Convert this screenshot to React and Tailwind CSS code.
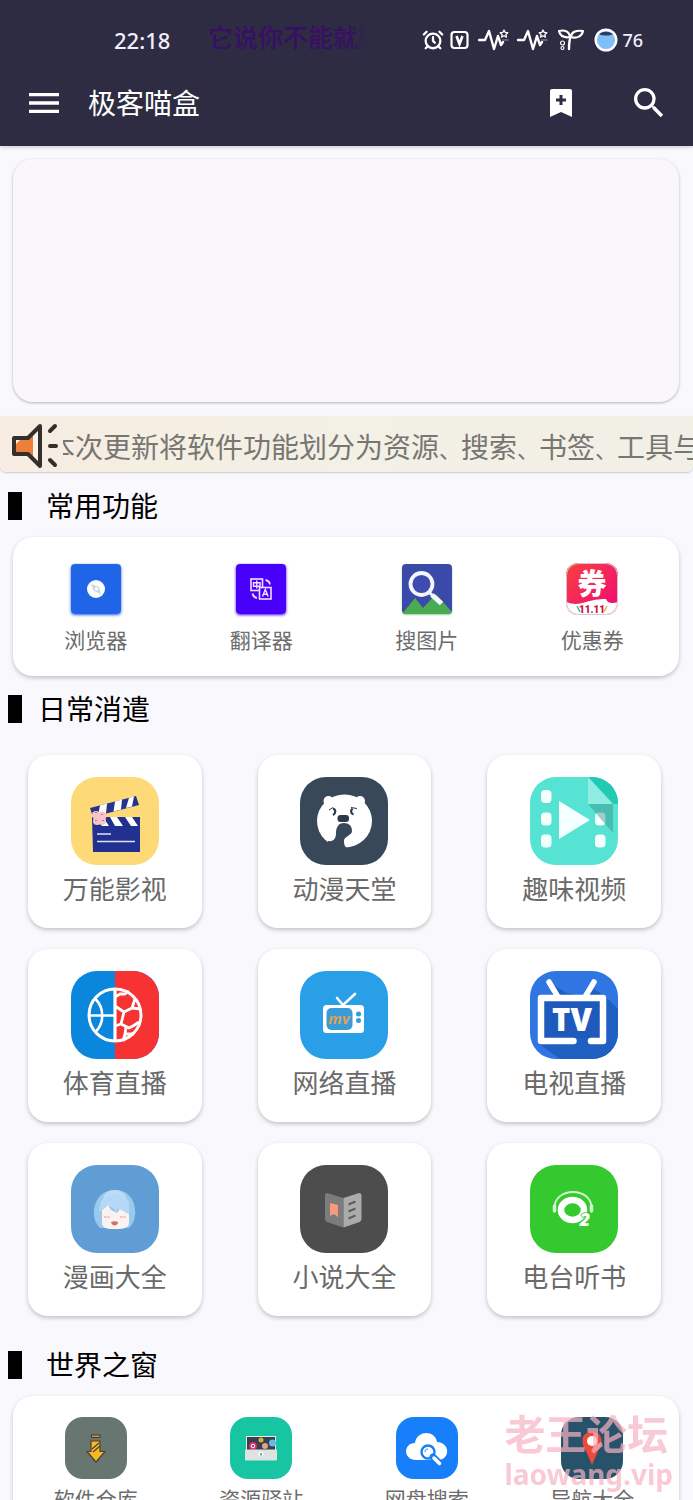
import React from "react";
import { AlarmClock } from "lucide-react";
import { MdMenu, MdSearch } from "react-icons/md";

const cardShadow = "shadow-[0_2px_4px_rgba(0,0,0,0.22)]";

/* ---------- status bar icons ---------- */

function PulseIcon() {
  return (
    <svg viewBox="0 0 31 24" className="h-6 w-[31px]" fill="none" stroke="#fff" strokeLinejoin="round" strokeLinecap="round">
      <path d="M1 12h6l4-9 5 18 4-13 3 9 2-3" strokeWidth="2.400" />
      <path d="M26 2l1.200 2.400 2.600.300-1.900 1.800.500 2.600-2.400-1.300-2.400 1.300.500-2.600-1.900-1.800 2.600-.300z" strokeWidth="1.300" />
      <path d="M25 12h5" stroke="#77758a" strokeWidth="1.500" />
    </svg>
  );
}

function SproutIcon() {
  return (
    <svg viewBox="0 0 26 24" className="h-6 w-[26px]" fill="none" stroke="#fff" strokeLinejoin="round" strokeLinecap="round">
      <path d="M11 21c0-6 0-9 2-13" strokeWidth="2.400" />
      <path d="M1 3c4-1 10-1 11 6C6 10 2 8 1 3zM13 9c0-5 5-7 12-6-1 5-6 8-12 6z" strokeWidth="2.200" />
      <circle cx="4.500" cy="15" r="2" strokeWidth="1.200" />
      <circle cx="4.500" cy="20" r="1.500" strokeWidth="1.200" />
    </svg>
  );
}

function StatusBar() {
  return (
    <div className="flex h-[60px] items-center pt-5 pr-[50px] pl-[114px] text-[#f1effa]">
      <span className="w-[94px] text-[22px] leading-8 font-medium">22:18</span>
      <span className="-mt-1.5 w-40 overflow-hidden text-[25px] leading-8 font-medium whitespace-nowrap text-[#390d68] [mask-image:linear-gradient(to_right,#000_88%,transparent)]">
        它说你不能就这
      </span>
      <div className="ml-auto flex items-center">
        <AlarmClock size={22} strokeWidth={2.5} className="mr-1.5 text-white" />
        <svg viewBox="0 0 20 20" className="mr-2 h-5 w-5" fill="none" stroke="#fff">
          <rect x="1.500" y="2" width="16" height="16" rx="3" strokeWidth="2.200" />
          <path d="M6.500 6l3 8 3-8" strokeWidth="2.600" />
        </svg>
        <PulseIcon />
        <span className="w-2" />
        <PulseIcon />
        <span className="w-2.5" />
        <SproutIcon />
        <svg viewBox="0 0 24 24" className="mx-2.5 h-6 w-6">
          <circle cx="12" cy="12" r="10" fill="#80bef7" />
          <path d="M5 6c3-3 11-3 14 0-3 2-11 2-14 0z" fill="#2b3c5c" />
          <circle cx="12" cy="12" r="10.300" fill="none" stroke="#fff" strokeWidth="2.400" />
        </svg>
        <span className="-ml-1.5 text-lg leading-8 font-medium">76</span>
      </div>
    </div>
  );
}

function TopBar() {
  return (
    <div className="flex h-[86px] items-center pr-6 pl-6 text-white">
      <button type="button" aria-label="菜单">
        <MdMenu size={40} />
      </button>
      <h1 className="ml-6 text-[28px] leading-9">极客喵盒</h1>
      <button type="button" aria-label="添加书签" className="ml-auto">
        <svg viewBox="0 0 24 30" className="h-[30px] w-6">
          <path d="M3 1h18a2 2 0 0 1 2 2v26l-11-5-11 5V3a2 2 0 0 1 2-2z" fill="#fff" />
          <path d="M12 7v10M7 12h10" stroke="#2e2c42" strokeWidth="3" />
        </svg>
      </button>
      <button type="button" aria-label="搜索" className="ml-14">
        <MdSearch size={40} />
      </button>
    </div>
  );
}

/* ---------- icons of the shortcut row ---------- */

function BrowserIcon() {
  return (
    <svg viewBox="0 0 50 50" className="h-[50px] w-[50px] rounded-sm shadow-[0_1px_3px_#2064e8]">
      <rect width="50" height="50" fill="#2064e8" />
      <circle cx="25" cy="25" r="9" fill="#fbfdff" />
      <path d="M20 20l8 3 2 7-7-3z" fill="#cbd8e2" />
      <circle cx="25.500" cy="25" r="1.800" fill="#fff" />
    </svg>
  );
}

function TranslateIcon() {
  return (
    <svg viewBox="0 0 50 50" className="h-[50px] w-[50px] rounded-sm shadow-[0_1px_3px_#4a00fb]" fill="none" stroke="#f3dcff" strokeWidth="1.600">
      <rect width="50" height="50" fill="#4800fa" stroke="none" />
      <rect x="15" y="15" width="11.500" height="11.500" />
      <path d="M17.500 18.700h6.500v3.600h-6.500zM20.750 16.500v8" strokeWidth="1.400" />
      <rect x="23.500" y="23.500" width="11.500" height="11.500" fill="#4800fa" />
      <path d="M26.500 32.500l2.800-7 2.800 7M27.500 30.300h3.600" strokeWidth="1.500" />
      <path d="M29.500 16c2.500.500 4 2 4.500 4.500M16.500 29.500c.500 2.500 2 4 4.500 4.500" strokeWidth="1.800" />
    </svg>
  );
}

function ImageSearchIcon() {
  return (
    <svg viewBox="0 0 50 50" className="h-[50px] w-[50px] rounded-sm shadow-[0_1px_2px_#9bd0a0]">
      <rect width="50" height="50" fill="#3b4aa8" />
      <path d="M0 50L13 34l8 10 13-14 16 18v2z" fill="#49ab52" />
      <circle cx="19.500" cy="20" r="11" fill="#3f4bae" stroke="#f4f7ff" strokeWidth="3.800" />
      <path d="M27.500 28.500l3 3" stroke="#f4f7ff" strokeWidth="3" />
      <path d="M30 31l9.500 8.500" stroke="#f4f7ff" strokeWidth="5" />
    </svg>
  );
}

function CouponIcon() {
  return (
    <svg viewBox="0 0 52 52" className="h-[52px] w-[52px] rounded-xl">
      <defs>
        <linearGradient id="coupon" x1="0" y1="0" x2="1" y2="1">
          <stop offset="0" stopColor="#f8413f" />
          <stop offset="1" stopColor="#f0067a" />
        </linearGradient>
      </defs>
      <rect width="52" height="52" fill="url(#coupon)" />
      <path d="M0 39c8 3 14 2 20 0 7-2 12-3 20-3 1 4 6 5 12 3v13H0z" fill="#fff" />
      <rect x="0.500" y="0.500" width="51" height="51" rx="12" fill="none" stroke="#d8c3cc" />
      <text x="26" y="32" textAnchor="middle" fontSize="29" fontWeight="900" fill="#fff">券</text>
      <text x="26" y="50" textAnchor="middle" fontSize="10" fontWeight="900" fill="#c8103c" className="font-[Roboto]">11.11</text>
      <path d="M11 43l3 6" stroke="#39bba0" strokeWidth="1.500" />
      <path d="M41 43l-3 6" stroke="#dfb34d" strokeWidth="1.500" />
    </svg>
  );
}

/* ---------- icons of the big tiles ---------- */

function Tile({ bg, children }) {
  return (
    <svg viewBox="0 0 88 88" className="h-[88px] w-[88px] rounded-[26px]">
      <rect width="88" height="88" fill={bg} />
      {children}
    </svg>
  );
}

function ClapperIcon() {
  return (
    <Tile bg="#fdd978">
      <path d="M19 31l46-12 3 9-46 12z" fill="#26348f" />
      <path d="M29 28.400l7-1.800-1 10-8 2zM44 24.500l7-1.900-1 10-7.500 2zM58 20.800l5-1.300-2 10-6 1.500z" fill="#fff" />
      <path d="M21 40h48v35H22z" fill="#22318f" />
      <path d="M25 40h7l6 9h-7zM39 40h7l6 9h-8zM54 40h7l6 9h-7z" fill="#fff" />
      <circle cx="25" cy="38" r="4" fill="#f8c4cb" />
      <circle cx="31" cy="39" r="4.500" fill="#f8c4cb" />
      <circle cx="26" cy="44" r="4" fill="#f8c4cb" />
      <circle cx="31" cy="44" r="4" fill="#f8c4cb" />
      <path d="M25 35v1M31 37v1M25 43v1M32 43v1" stroke="#b2478a" strokeWidth="1.500" />
      <path d="M26 57h14M26 64.500h38" stroke="#dfe1f3" strokeWidth="1.600" />
    </Tile>
  );
}

function BearIcon() {
  return (
    <Tile bg="#384858">
      <ellipse cx="44.500" cy="44" rx="27.500" ry="26.500" fill="#fff" />
      <circle cx="28.500" cy="24" r="5" fill="#fff" />
      <circle cx="60" cy="24" r="5" fill="#fff" />
      <path d="M36 56c0-5 2-10 8-10s8 4 8 8c0 5-9 5-8 11 0 3 1 5 4 7H28v-8c6 1 8-3 8-8z" fill="#384858" />
      <rect x="37.500" y="38" width="11.500" height="7" rx="3" fill="#2d3a47" />
      <path d="M33 31.500c3 1 3 5 0 6.500M52.500 31.500c-2 2-2 5 1 6" fill="none" stroke="#2d3a47" strokeWidth="2.200" />
      <path d="M29 33l4-2.500M51 30.500l6 1" stroke="#2d3a47" strokeWidth="1" />
    </Tile>
  );
}

function FunVideoIcon() {
  return (
    <Tile bg="#56e3d3">
      <rect x="11" y="13" width="10.500" height="13" rx="4" fill="#f4fffd" />
      <rect x="11" y="35.500" width="10.500" height="13" rx="4" fill="#f4fffd" />
      <rect x="11" y="57.500" width="10.500" height="13" rx="4" fill="#f4fffd" />
      <rect x="65" y="35.500" width="10.500" height="13" rx="4" fill="#f4fffd" />
      <rect x="65" y="57.500" width="10.500" height="13" rx="4" fill="#f4fffd" />
      <path d="M29 24l31 19-31 19z" fill="#f4ffff" />
      <path d="M58 0h30v27h-5z" fill="#22c9b5" />
      <path d="M58 0l25 27H58z" fill="#8eece0" />
      <path d="M58 27h25v29z" fill="#3a8f84" fillOpacity="0.45" />
    </Tile>
  );
}

function SportsIcon() {
  return (
    <Tile bg="#0a86dc">
      <rect x="44" width="44" height="88" fill="#f63233" />
      <g fill="none" stroke="#fff" strokeWidth="2.600" strokeLinejoin="round">
        <circle cx="44" cy="44" r="26" strokeWidth="3" />
        <path d="M44 18v52" strokeWidth="3.200" />
        <path d="M18 44.500h14M32 44.500h12M24.500 28c9 9 9 24 0 33" />
        <path d="M44 26l5-3 5 0 4-3M44 35l9 6 8-4 9 1M61 37l3-9M53 41l-3 12-6 2M50 53l8 4 4-2 6-4M55 56l-1 7-2 7M54 63l9 0" strokeWidth="2.800" />
      </g>
    </Tile>
  );
}

function NetTvIcon() {
  return (
    <Tile bg="#289fe6">
      <path d="M37 27l6 7 12-11" fill="none" stroke="#fff" strokeWidth="2.600" strokeLinecap="round" />
      <rect x="23" y="34" width="41" height="28" rx="3.500" fill="#fff" />
      <rect x="26.500" y="37" width="26" height="22" rx="5" fill="#3a9cd6" />
      <text x="39" y="53" textAnchor="middle" fontSize="15" fontWeight="700" fontStyle="italic" fill="#dba25c">mv</text>
      <circle cx="58.500" cy="43" r="2.500" fill="#289fe6" />
      <circle cx="58.500" cy="49.500" r="2.500" fill="#289fe6" />
    </Tile>
  );
}

function TvIcon() {
  return (
    <Tile bg="#2f76e3">
      <path d="M8 72L30 88h58V38L76 26l-12-8-8 8-20-4-12-8z" fill="#1f5fc2" />
      <path d="M14 29h58v38H14z" fill="#1e5abb" />
      <path d="M19 11l9 15M64 11l-9 15" stroke="#fff" strokeWidth="5.500" strokeLinecap="round" />
      <path d="M43.500 70H11V27h62v43H61" fill="none" stroke="#fff" strokeWidth="6.500" strokeLinecap="round" strokeLinejoin="round" />
      <text x="42" y="60" textAnchor="middle" fontSize="31" fontWeight="900" fill="#fff">TV</text>
    </Tile>
  );
}

function ComicIcon() {
  return (
    <Tile bg="#5f9dd4">
      <path d="M29 63c-5-5-7-12-6-19 2-12 10-19 21-19s19 7 20 19c1 7-1 14-6 19z" fill="#9bc9ee" />
      <path d="M31 39c1-9 4-14 13-14s14 8 14 22z" fill="#bcdcf5" />
      <path d="M31 45l6-5 3 5 6 3 3-4 7 4 2 1v10c-2 5-8 5-14 5s-13 0-13-6z" fill="#f9f2f1" />
      <path d="M28 47l6-5 4-6 6 9 2 2v-5l12 7V36L44 28l-14 8z" fill="#b4d8f5" />
      <path d="M33 52h6M49 52h6" stroke="#edb2ae" strokeWidth="1.500" strokeDasharray="2 0.700" />
      <path d="M40 57c2-1 5-1 7 0 0 4-6 5-7 0z" fill="#d76b6e" />
    </Tile>
  );
}

function NovelIcon() {
  return (
    <Tile bg="#4d4d4d">
      <path d="M27 28l16.500 5v29.500L27 57q-2-1-2-3V30q0-2 2-2z" fill="#7c7c7c" />
      <path d="M43.500 33L59 28q2.500 0 2.500 2.500V54q0 2-2 3l-16 5.500z" fill="#ababab" />
      <path d="M30 38l8 2v12l-4-3-4 2z" fill="#f59a7b" />
      <path d="M48.500 39.500l7-3M48.500 46.500l7-3M48.500 53.500l7-3" stroke="#5e5e5e" strokeWidth="2" />
    </Tile>
  );
}

function RadioIcon() {
  return (
    <Tile bg="#34c92f">
      <ellipse cx="42.500" cy="45" rx="11.500" ry="10" fill="none" stroke="#fff" strokeWidth="6.500" />
      <path d="M24.500 42c1-20 36-20 37 0" fill="none" stroke="#d3f6d0" strokeWidth="2" />
      <path d="M24.500 41v5M61.500 41v5" stroke="#d3f6d0" strokeWidth="3.500" strokeLinecap="round" />
      <text x="55" y="61" textAnchor="middle" fontSize="18" fontWeight="900" fontStyle="italic" fill="#fff" stroke="#34c92f" strokeWidth="1.500" paintOrder="stroke">2</text>
    </Tile>
  );
}

/* ---------- icons of the last row ---------- */

function SmallTile({ bg, children }) {
  return (
    <svg viewBox="0 0 62 62" className="h-[62px] w-[62px] rounded-[18px]">
      <rect width="62" height="62" fill={bg} />
      {children}
    </svg>
  );
}

function WarehouseIcon() {
  return (
    <SmallTile bg="#677671">
      <rect x="26.500" y="18" width="8.500" height="2.500" fill="#d49a2d" stroke="#49382f" />
      <path d="M26 24h9v10.500h5L31 45l-9-10.500h4z" fill="#fab722" stroke="#493f38" strokeWidth="1.200" />
      <path d="M27 32l7-6M28 35l7-6" stroke="#493f38" strokeWidth="1.200" />
    </SmallTile>
  );
}

function StationIcon() {
  return (
    <SmallTile bg="#18c5a2">
      <rect x="16.500" y="19.500" width="29" height="20" fill="#37404f" stroke="#e6edec" />
      <circle cx="23" cy="29" r="4" fill="#d92a6c" />
      <circle cx="23" cy="29" r="1.800" fill="none" stroke="#fff" />
      <circle cx="31" cy="23" r="2.500" fill="#d8ad3c" />
      <circle cx="35" cy="29" r="3" fill="#e2a284" />
      <circle cx="42.500" cy="26" r="3.500" fill="#68b9e8" />
      <rect x="15" y="32.500" width="32" height="11" rx="1" fill="#dde2e3" />
      <circle cx="31" cy="37" r="2.500" fill="#fff" />
      <path d="M31 36v2.500" stroke="#333" />
    </SmallTile>
  );
}

function CloudSearchIcon() {
  return (
    <SmallTile bg="#187ffb">
      <path d="M20 43c-13 0-13-17-1-17 2-13 20-13 22-1 14 1 13 18 1 18z" fill="#fff" />
      <circle cx="32" cy="35" r="6.500" fill="#fff" stroke="#187ffb" strokeWidth="2.400" />
      <path d="M37 40l7 7" stroke="#187ffb" strokeWidth="7" strokeLinecap="round" />
      <path d="M38 41l5.500 5.500" stroke="#fff" strokeWidth="3.500" strokeLinecap="round" />
      <path d="M29 35c0-2 1-3 3-3" fill="none" stroke="#187ffb" />
    </SmallTile>
  );
}

function NavIcon() {
  return (
    <SmallTile bg="#26526a">
      <path d="M31 15c-12 0-11 12-6 19l6 14 6-14c5-7 6-19-6-19z" fill="#ed4a3b" />
      <circle cx="31" cy="24" r="5" fill="#fff" />
    </SmallTile>
  );
}

function SpeakerIcon() {
  return (
    <svg viewBox="0 0 50 50" className="mt-1 h-[50px] w-[50px] shrink-0">
      <path d="M4 17h14L30 5v40L18 33H4z" fill="#fbf3ea" />
      <path d="M5 24l6-6h8l4-4v24l-4-5H5z" fill="#ee7f3b" />
      <path d="M4 17h14L30 5v40L18 33H4z" fill="none" stroke="#332f2c" strokeWidth="4" strokeLinejoin="round" />
      <path d="M40 10l5-5M40 25h6M40 39l5 5" stroke="#332f2c" strokeWidth="4" strokeLinecap="round" />
    </svg>
  );
}

/* ---------- data ---------- */

const notice = ["本次更新将软件功能划分为资源", "搜索", "书签", "工具与"];

const common = [
  { name: "浏览器", Icon: BrowserIcon },
  { name: "翻译器", Icon: TranslateIcon },
  { name: "搜图片", Icon: ImageSearchIcon },
  { name: "优惠券", Icon: CouponIcon },
];

const daily = [
  { name: "万能影视", Icon: ClapperIcon },
  { name: "动漫天堂", Icon: BearIcon },
  { name: "趣味视频", Icon: FunVideoIcon },
  { name: "体育直播", Icon: SportsIcon },
  { name: "网络直播", Icon: NetTvIcon },
  { name: "电视直播", Icon: TvIcon },
  { name: "漫画大全", Icon: ComicIcon },
  { name: "小说大全", Icon: NovelIcon },
  { name: "电台听书", Icon: RadioIcon },
];

const world = [
  { name: "软件仓库", Icon: WarehouseIcon },
  { name: "资源驿站", Icon: StationIcon },
  { name: "网盘搜索", Icon: CloudSearchIcon },
  { name: "导航大全", Icon: NavIcon },
];

function SectionTitle({ children, tight }) {
  return (
    <h2 className={`flex items-center pl-2 text-[28px] leading-9 text-black ${tight ? "gap-4" : "gap-6"}`}>
      <span className="h-7 w-[14px] bg-black" />
      {children}
    </h2>
  );
}

function Shortcut({ item }) {
  const { name, Icon } = item;
  return (
    <button type="button" className="flex flex-col items-center text-[21px] leading-6 text-[#6c6c6c]">
      <span className="flex h-[62px] items-center">
        <Icon />
      </span>
      <span className="mt-2">{name}</span>
    </button>
  );
}

function App() {
  return (
    <div className="relative flex h-screen flex-col overflow-hidden bg-[#f9f8fc] font-['Noto_Sans','Noto_Sans_CJK_SC',sans-serif]">
      <header className="shrink-0 bg-[#2e2c42] shadow-[0_1px_4px_rgba(0,0,0,0.2)]">
        <StatusBar />
        <TopBar />
      </header>

      <main className="min-h-0 flex-1 overflow-y-auto [scrollbar-width:none]">
        {/* BANNER */}
        <div className="mt-[13px] mr-[14px] ml-[13px] h-[243px] rounded-[20px] bg-[#f9f7fb] shadow-[0_1px_3px_rgba(0,0,0,0.28)]" />

        {/* NOTICE */}
        <div className="mt-[14px] flex h-14 items-center rounded-b-md bg-linear-to-r from-[#f7ede2] via-[#f3f0e5] to-[#f2f0e6] pl-[10px] shadow-[0_1px_2px_rgba(0,0,0,0.2)]">
          <SpeakerIcon />
          <div className="ml-[3px] min-w-0 flex-1 overflow-hidden">
            <p className="-ml-4 pt-2 text-[28px] leading-9 whitespace-nowrap text-[#777673]">
              {notice.map((part, i) => (
                <React.Fragment key={part}>
                  {i > 0 && <span className="text-[22px]">、</span>}
                  {part}
                </React.Fragment>
              ))}
            </p>
          </div>
        </div>

        <div className="mt-4">
          <SectionTitle>常用功能</SectionTitle>
        </div>
        <div className={`mt-[13px] mr-[14px] ml-[13px] grid h-[139px] grid-cols-4 items-start rounded-[20px] bg-white pt-[21px] pr-1 ${cardShadow}`}>
          {common.map((item) => (
            <Shortcut key={item.name} item={item} />
          ))}
        </div>

        <div className="mt-[15px]">
          <SectionTitle tight>日常消遣</SectionTitle>
        </div>
        <div className="mt-7 grid grid-cols-3 gap-y-[21px] pr-1">
          {daily.map(({ name, Icon }) => (
            <div key={name} className="px-7">
              <button
                type="button"
                className={`flex h-[173px] w-full flex-col items-center rounded-[20px] bg-white pt-[22px] text-[26px] leading-8 text-[#6a6a6a] ${cardShadow}`}
              >
                <Icon />
                <span className="mt-2 whitespace-nowrap">{name}</span>
              </button>
            </div>
          ))}
        </div>

        <div className="mt-[31px]">
          <SectionTitle>世界之窗</SectionTitle>
        </div>
        <div className={`mt-[13px] mr-[14px] mb-4 ml-[13px] grid h-[139px] grid-cols-4 items-start rounded-[20px] bg-white pt-[21px] pr-1 ${cardShadow}`}>
          {world.map((item) => (
            <Shortcut key={item.name} item={item} />
          ))}
        </div>
      </main>

      {/* WATERMARK */}
      <div className="pointer-events-none absolute right-5 bottom-2 font-bold text-[#f8b4c2] opacity-70">
        <p className="text-[41px] leading-[44px]">老王论坛</p>
        <p className="text-[28px] leading-9">laowang.vip</p>
      </div>
    </div>
  );
}

export default App;
